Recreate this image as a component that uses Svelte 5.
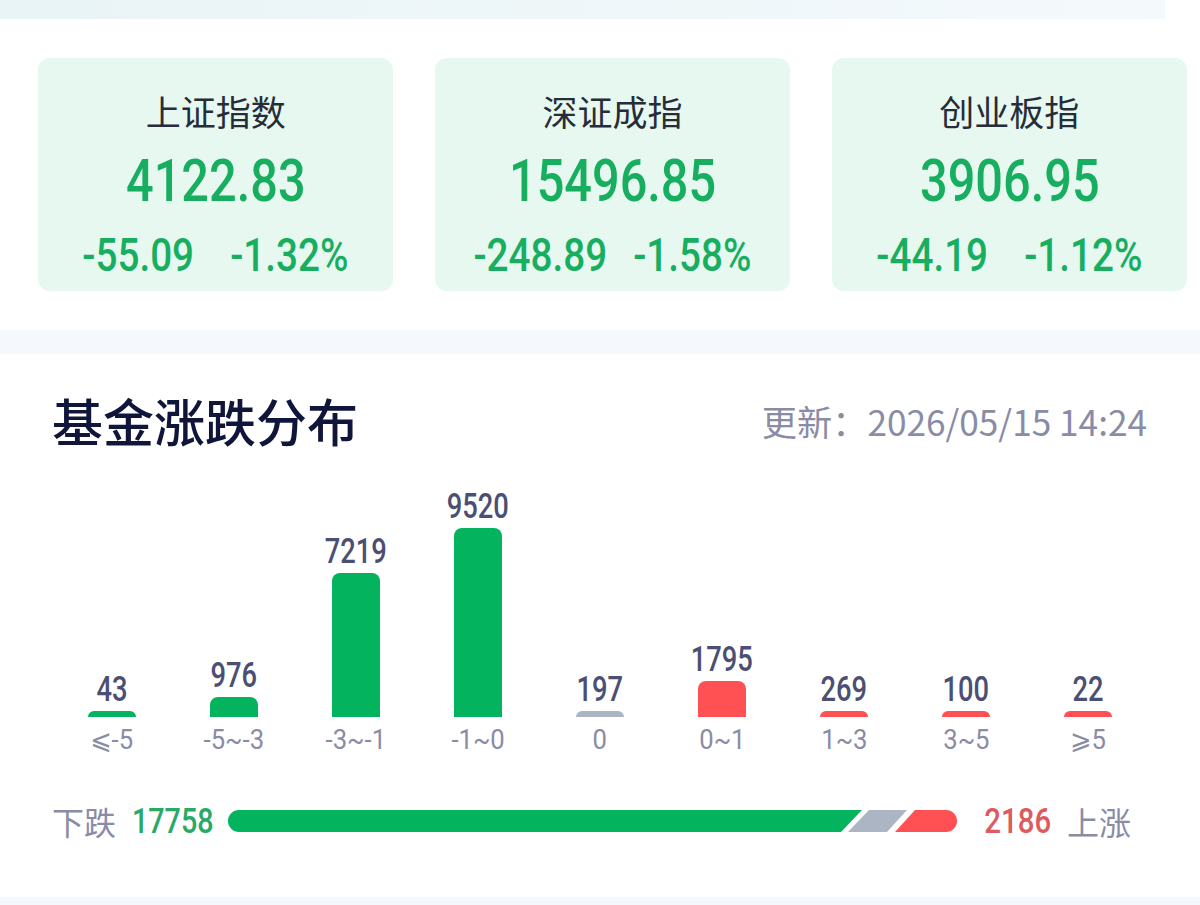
<script>
  const indexes = [
    { name: "上证指数", value: "4122.83", diff: "-55.09", pct: "-1.32%", gap: 43 },
    { name: "深证成指", value: "15496.85", diff: "-248.89", pct: "-1.58%", gap: 31 },
    { name: "创业板指", value: "3906.95", diff: "-44.19", pct: "-1.12%", gap: 43 }
  ];

  // h is the drawn bar height in px
  const bars = [
    { count: 43, label: "⩽-5", h: 6, type: "down" },
    { count: 976, label: "-5~-3", h: 20, type: "down" },
    { count: 7219, label: "-3~-1", h: 144, type: "down" },
    { count: 9520, label: "-1~0", h: 189, type: "down" },
    { count: 197, label: "0", h: 6, type: "flat" },
    { count: 1795, label: "0~1", h: 36, type: "up" },
    { count: 269, label: "1~3", h: 6, type: "up" },
    { count: 100, label: "3~5", h: 6, type: "up" },
    { count: 22, label: "⩾5", h: 6, type: "up" }
  ];
</script>

<div class="page">
  <div class="strip"></div>

  <div class="cards">
    {#each indexes as item}
      <div class="card">
        <div class="name">{item.name}</div>
        <div class="value">{item.value}</div>
        <div class="changes" style="gap: {item.gap}px">
          <span>{item.diff}</span>
          <span>{item.pct}</span>
        </div>
      </div>
    {/each}
  </div>

  <div class="band"></div>

  <div class="section">
    <div class="head">
      <div class="title">基金涨跌分布</div>
      <div class="updated">更新：2026/05/15 14:24</div>
    </div>

    <div class="chart">
      {#each bars as bar}
        <div class="col">
          <div class="count">{bar.count}</div>
          <div class="bar {bar.type}" style="height: {bar.h}px"></div>
          <div class="label">{bar.label}</div>
        </div>
      {/each}
    </div>

    <div class="summary">
      <span class="word">下跌</span>
      <span class="num green">17758</span>
      <svg class="track" width="730" height="22" viewBox="0 0 730 22">
        <path d="M11 0H634L613 22H11A11 11 0 0 1 11 0Z" fill="#03b35e" />
        <path d="M641 0H679L659 22H620Z" fill="#acb5c3" />
        <path d="M687 0H718A11 11 0 0 1 718 22H667Z" fill="#ff5053" />
      </svg>
      <span class="num red">2186</span>
      <span class="word">上涨</span>
    </div>
  </div>

  <div class="band"></div>
</div>

<style>
  :global(body) {
    margin: 0;
    background: #fff;
  }
  .page {
    width: 1200px;
    height: 905px;
    overflow: hidden;
    display: flex;
    flex-direction: column;
    font-family: "Noto Sans CJK SC", sans-serif;
  }
  .strip {
    height: 19px;
    flex: none;
    margin-right: 35px;
    background: linear-gradient(90deg, #e9f4f6, #f4f9fc);
  }
  .cards {
    flex: none;
    display: flex;
    gap: 41.5px;
    padding: 39px 13px 39px 38px;
  }
  .card {
    flex: 1;
    height: 233px;
    border-radius: 12px;
    background: #e6f8f0;
    display: flex;
    flex-direction: column;
    align-items: center;
  }
  .name {
    margin-top: 29px;
    font-size: 35px;
    line-height: 48px;
    color: #262c38;
  }
  .value {
    margin-top: 15px;
    font-family: "Roboto", sans-serif;
    font-weight: 500;
    font-size: 59px;
    line-height: 62px;
    color: #17ae60;
    transform: scaleX(0.825);
  }
  .changes {
    margin-top: 18px;
    display: flex;
    font-family: "Roboto", sans-serif;
    font-weight: 500;
    font-size: 46px;
    line-height: 50px;
    color: #17ae60;
    transform: scaleX(0.84);
  }
  .band {
    height: 24px;
    flex: none;
    background: #f5f9fd;
  }
  .section {
    height: 543px;
    flex: none;
    padding: 0 53px 0 52px;
    display: flex;
    flex-direction: column;
  }
  .head {
    height: 132px;
    flex: none;
    display: flex;
    justify-content: space-between;
    align-items: center;
  }
  .title {
    font-size: 51px;
    font-weight: 500;
    color: #10163a;
  }
  .updated {
    font-size: 35.2px;
    color: #8a8ca6;
  }
  .chart {
    display: flex;
    align-items: flex-end;
    margin: 0 -53px 0 -52px;
    height: 277px;
    flex: none;
    justify-content: center;
  }
  .col {
    width: 122px;
    display: flex;
    flex-direction: column;
    align-items: center;
  }
  .count {
    margin-bottom: 1px;
    font-family: "Roboto", sans-serif;
    font-weight: 500;
    font-size: 35px;
    line-height: 40px;
    color: #4b4f73;
    transform: scaleX(0.78);
  }
  .bar {
    width: 48px;
    border-radius: 8px 8px 0 0;
  }
  .down { background: #03b35e; }
  .flat { background: #acb5c3; }
  .up { background: #ff5053; }
  .label {
    font-family: "Roboto", "DejaVu Sans", sans-serif;
    font-size: 27px;
    line-height: 46px;
    color: #8a8ca6;
    transform: scaleX(0.95);
  }
  .summary {
    margin-top: 43px;
    height: 30px;
    flex: none;
    display: flex;
    align-items: center;
  }
  .word {
    flex: none;
    font-size: 32px;
    color: #8a8ca6;
  }
  .num {
    flex: none;
    font-family: "Roboto", sans-serif;
    font-weight: 500;
    font-size: 35px;
  }
  .green {
    color: #2aa866;
    margin: 0 6px 0 7px;
    transform: scaleX(0.82);
  }
  .red {
    color: #dd5a5e;
    margin: 0 9px 0 20px;
    transform: scaleX(0.84);
  }
  .track { flex: none; }
</style>
